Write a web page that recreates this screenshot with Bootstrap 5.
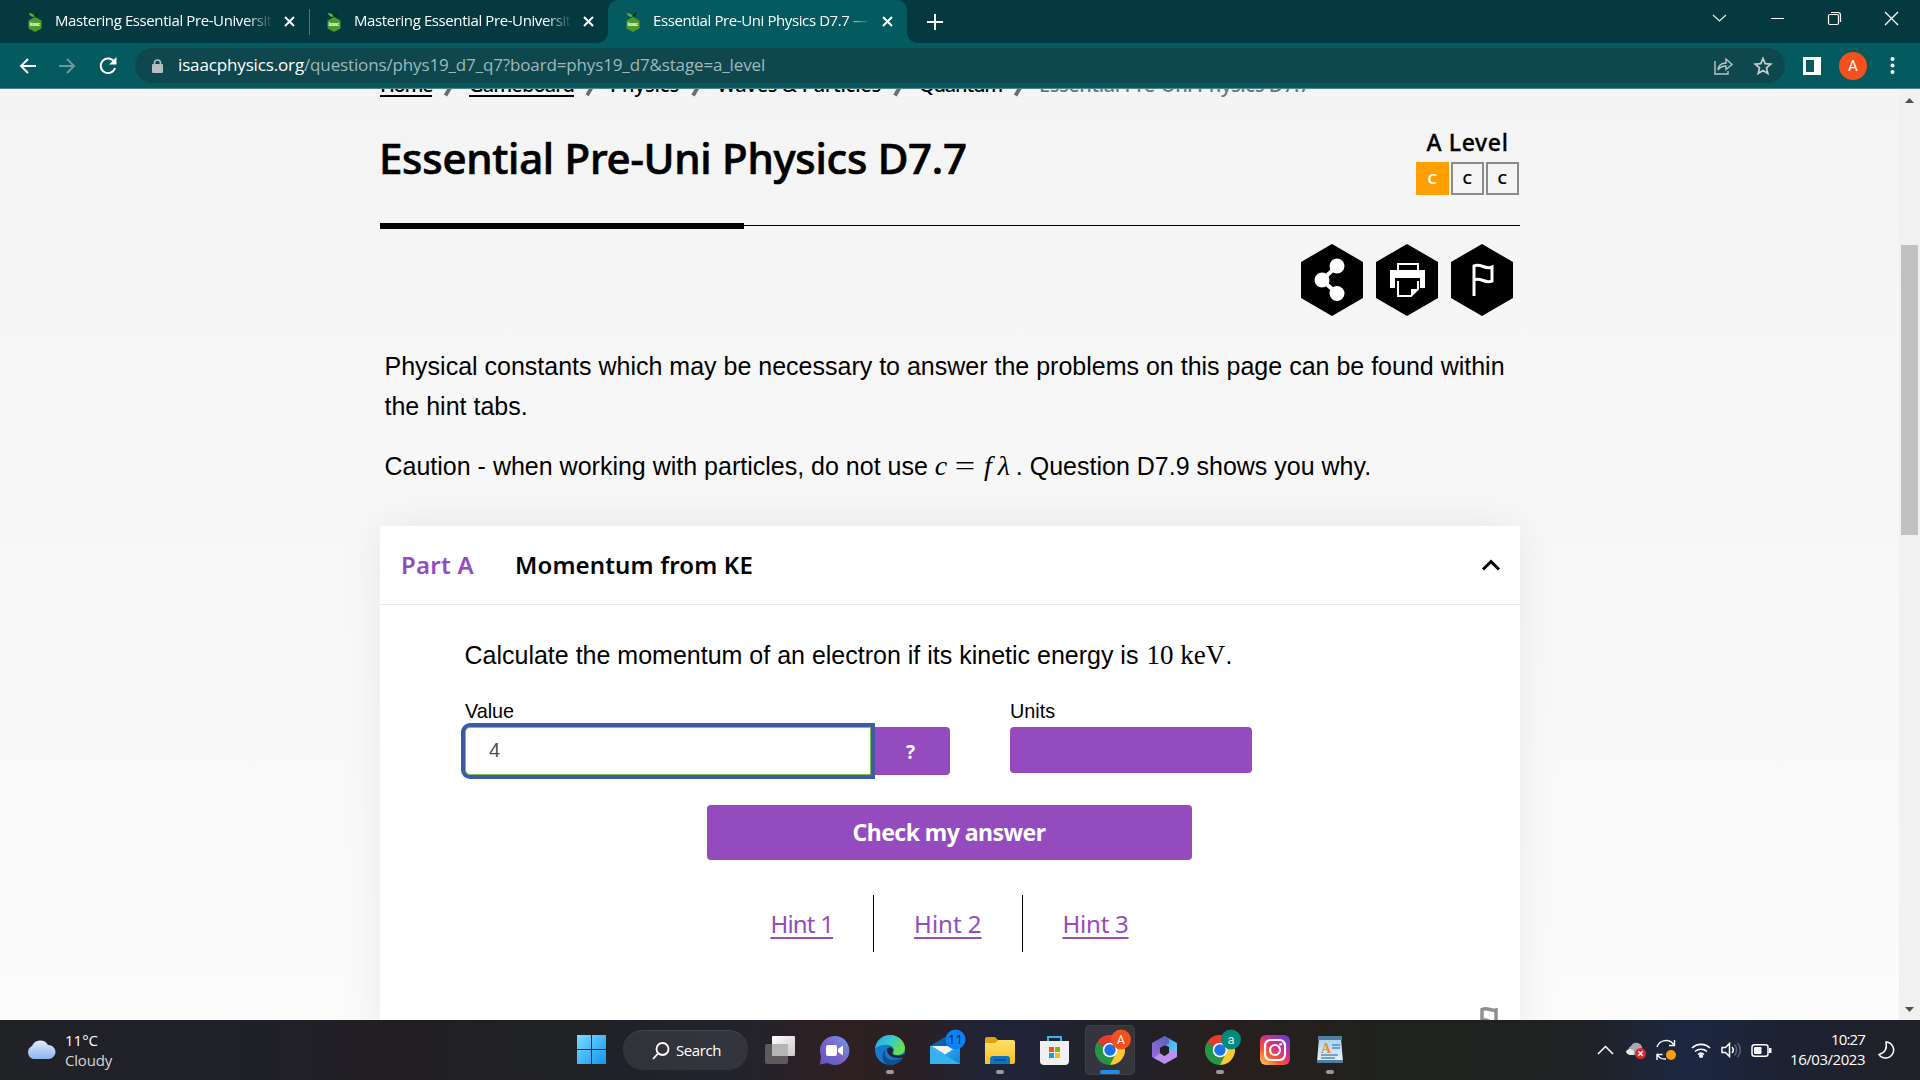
<!DOCTYPE html>
<html lang="en">
<head>
<meta charset="utf-8">
<meta name="viewport" content="width=device-width, initial-scale=1">
<title>Essential Pre-Uni Physics D7.7 — Isaac Physics</title>
<link href="https://cdn.jsdelivr.net/npm/bootstrap@5.3.0/dist/css/bootstrap.min.css" rel="stylesheet">
<style>
:root{--ui:"Open Sans","Noto Sans",sans-serif;--exo:"Noto Sans","Open Sans",sans-serif;--violet:#944bbd}
html,body{height:1080px;overflow:hidden}
body{background:#f5f5f5;color:#000;font-family:"Liberation Sans",Arial,sans-serif}
svg{display:block;flex:none;overflow:visible}
.fit{white-space:nowrap}
.tabstrip{height:43px;background:#03393f;font:15px/41px var(--ui);color:#fff}
.btab{height:43px;width:305px;padding-left:28px;position:relative}
.btab.second{width:303px;padding-left:22px}
.btab .ttl{width:218px;height:43px;margin-left:13px;overflow:hidden;white-space:nowrap;letter-spacing:-.4px;-webkit-mask-image:linear-gradient(90deg,#000 88%,transparent)}
.btab .x{margin-left:11px}
.btab.first::after{content:"";position:absolute;right:-5px;top:9px;width:1px;height:26px;background:#4d767a}
.btab.active{width:299px;padding-left:18px;background:#055a5f;border-radius:10px 10px 0 0}
.btab.active::before,.btab.active::after{content:"";position:absolute;bottom:0;width:10px;height:10px}
.btab.active::before{left:-10px;background:radial-gradient(circle at 0 0,#03393f 9.5px,#055a5f 10px)}
.btab.active::after{right:-10px;background:radial-gradient(circle at 100% 0,#03393f 9.5px,#055a5f 10px)}
.plus{margin-left:20px}
.wincontrols{gap:44px;padding-right:22px;margin-top:-7px}
.toolbar{height:46px;background:#055a5f;border-bottom:1px solid #4a8588;font:17px/34px var(--ui);padding-left:19px}
.navs{gap:23px}
.urlbar{width:1650px;height:35px;border-radius:18px;background:#0f474e;color:#9fb9bb;margin-left:18px;padding:0 13px 0 17px}
.urltext{margin-left:15px;letter-spacing:-.142px;height:35px}
.star{margin-left:21px}
.avatar{width:28px;height:28px;border-radius:50%;background:#f4511e;color:#fff;font:15px/28px Roboto,sans-serif;margin:0 23px 0 18px}
.viewport{height:931px;overflow:hidden;background:linear-gradient(#f4f4f4,#fbfbfb)}
.pagecol{width:1140px;margin-left:380px}
.scroller{width:21px;background:#f1f1f1}
.thumb{width:17px;height:290px;background:#c1c1c1;margin-top:142px}
.crumbs{height:14px;font:500 20px/28px var(--exo)}
.crumbs .trail{margin-top:-18px;height:28px}
.crumbs .fit{flex:none}
.crumbs u{text-underline-offset:3px;text-decoration-thickness:2px}
.crumbs i{font-style:normal;color:#6c757d}
.ls-home{letter-spacing:-1.4px;width:52px}.ls-game{letter-spacing:-.88px;width:105px}.ls-phys{letter-spacing:-.14px;width:69px}.ls-wave{letter-spacing:-.255px;width:164px}.ls-quan{letter-spacing:-1.19px;width:83px}.ls-last{letter-spacing:-.43px}
.qtitle{font:500 42px/50px var(--exo);margin:30px 0 0 -1px;letter-spacing:-.28px;-webkit-text-stroke:.7px #000}
.level{font:500 23px/28px var(--exo);margin:25px 1px 0 0;letter-spacing:.627px;-webkit-text-stroke:.3px #000}
.lvs{gap:2px;margin-top:6px;-webkit-text-stroke:0}
.lv{width:33px;height:33px;border:2px solid #8b8b8b;font:600 15px/28px var(--exo);color:#000}
.lv.on{background:#ffa000;border-color:#ffa000;color:#fff}
.headrow{height:120px}
.rule{height:6px;background:linear-gradient(#000,#000) 0 0/364px 6px no-repeat,linear-gradient(#000,#000) 0 2px/100% 1px no-repeat}
.hexes{gap:13px;margin-top:15px;padding-right:7px}
.prose{font-size:25px;line-height:40px;white-space:nowrap}
.intro{padding:30px 5px 0 4.5px}
.caution{margin-top:20px}
.math{font-family:"Liberation Serif",serif;font-size:28px;line-height:30px;margin:5px 0 0 7px}
.formula{width:81px}
.formula b{font-weight:400;display:inline-block;transform:scaleX(1.3);margin:0 11px 0 10px}
.formula .lam{margin-left:6px}
.energy{width:79px;font-size:27px;margin-left:8px}
.qcard{background:#fff;border:0;border-radius:0;height:520px;margin-top:40px;box-shadow:0 0 40px rgba(0,0,0,.07)}
.qhead{height:79px;border-bottom:1px solid #e8e8e8;padding:0 20px 0 21px;font:600 24px/76px var(--exo)}
.part{width:73px;margin-right:41px;letter-spacing:.279px;color:var(--violet)}
.ptitle{letter-spacing:.145px}
.qbody{padding:0 85px 0 84px}
.ask{padding:30px 0 0 .5px}
.fields{margin-top:22px;gap:60px;padding-left:1px}
.lbl{font-size:19.8px;line-height:28px;padding-bottom:2px}
.answer{width:406px;height:48px;border:1px solid #7fc24c;border-radius:5px 0 0 5px;box-shadow:0 0 0 4px #3f5aa6;font-size:20px;color:#495057;padding:0 23px;line-height:44px;position:relative;background:#fff}
.vbtn{background:var(--violet);color:#fff;border:0;font-family:var(--exo)}
.help{width:79px;height:48px;border-radius:0 4px 4px 0;font-weight:700;font-size:19px;padding:8px 10px 6px}
.units{width:242px;height:46px;border-radius:4px}
.checkrow{margin-top:30px;padding-right:1px}
.check{width:485px;height:55px;border-radius:4px;font-weight:700;font-size:23px;letter-spacing:-.539px}
.hints{margin-top:35px}
.hint{font:24px/57px var(--exo);height:57px;padding:0 40px;color:var(--violet);text-decoration:none}
.hint span{text-decoration:underline;text-decoration-thickness:2px;text-underline-offset:4px}
.hint+.hint{border-left:1px solid #000}
.h1s{letter-spacing:-.8px}.h3s{letter-spacing:-.242px}
.flagrow{margin:55px -63px 0}
.taskbar{height:60px;color:#fff;font:15px/20px var(--ui);background:linear-gradient(90deg,#202226 0,#1f2128 12%,#221f24 20%,#202226 30%,#22232d 38%,#2f2022 44%,#2a2023 47%,#20243a 52%,#20222c 57%,#271f1e 64%,#20221d 72%,#1f2223 82%,#1c2742 88%,#1d2232 93%,#202127)}
.cloud{margin-left:25px}
.weather{margin-left:9px;width:512px;padding-bottom:1px}
.weather .sky{color:#d5d5d8;letter-spacing:-.193px}
.spill{width:125px;height:40px;border-radius:20px;background:rgba(255,255,255,.08);border-top:1px solid rgba(255,255,255,.1);margin:0 4px 0 16px;padding-left:29px}
.spill span{margin:-2px 0 0 6px;letter-spacing:-.417px}
.app{width:55px;height:60px;position:relative}
.app::after{content:"";position:absolute;left:24px;bottom:6px;width:8px;height:4px;border-radius:2px}
.app.run::after{background:#9a9a9a}
.app.focus::after{background:#1690f5;left:18px;width:20px}
.app.focus::before{content:"";position:absolute;left:3px;top:5px;width:50px;height:50px;border-radius:5px;background:rgba(255,255,255,.09);border:1px solid rgba(255,255,255,.05)}
.app svg{position:relative}
.tray{margin-left:240px}
.tray svg{margin-right:10px}
.clock{width:83px;line-height:20.5px;letter-spacing:-.463px;padding-bottom:2px;margin-right:13px}
.clock .hm{letter-spacing:-.85px}
</style>
</head>
<body class="d-flex flex-column">
<svg width="0" height="0" class="position-absolute">
<defs>
<linearGradient id="gw" x1="0" y1="0" x2="1" y2="1"><stop stop-color="#7bdcff"/><stop offset="1" stop-color="#0f95f0"/></linearGradient>
<linearGradient id="gt" x1="0" y1="0" x2="1" y2="1"><stop stop-color="#fff"/><stop offset="1" stop-color="#c9c9c9"/></linearGradient>
<linearGradient id="gc" x1="0" y1="1" x2="1" y2="0"><stop stop-color="#5b55c8"/><stop offset=".5" stop-color="#7a66c5"/><stop offset="1" stop-color="#6f9bea"/></linearGradient>
<linearGradient id="ge" x1="0" y1="0" x2="1" y2=".5"><stop stop-color="#2c9fe0"/><stop offset=".5" stop-color="#36c8d0"/><stop offset="1" stop-color="#6be04a"/></linearGradient>
<linearGradient id="gm" x1="0" y1="0" x2="1" y2="1"><stop stop-color="#3fc0f3"/><stop offset="1" stop-color="#0f7fd6"/></linearGradient>
<linearGradient id="gf" x1="0" y1="0" x2="0" y2="1"><stop stop-color="#ffdf6b"/><stop offset="1" stop-color="#fcbf25"/></linearGradient>
<linearGradient id="g3" x1="0" y1="0" x2="1" y2="1"><stop stop-color="#3b8fdd"/><stop offset="1" stop-color="#5fd6f7"/></linearGradient>
<linearGradient id="g4" x1="0" y1="1" x2="1" y2="0"><stop stop-color="#a06be0"/><stop offset="1" stop-color="#4f63b8"/></linearGradient>
<linearGradient id="gi" x1="0" y1="1" x2=".8" y2="0"><stop stop-color="#ffd257"/><stop offset=".35" stop-color="#f9572f"/><stop offset=".65" stop-color="#d32b8b"/><stop offset="1" stop-color="#6a3fd0"/></linearGradient>
<linearGradient id="gp" x1="0" y1="0" x2="0" y2="1"><stop stop-color="#a8d4ef"/><stop offset="1" stop-color="#e6f3fb"/></linearGradient>
<linearGradient id="gl" x1="0" y1="0" x2="0" y2="1"><stop stop-color="#dfe9fb"/><stop offset="1" stop-color="#8fb4ee"/></linearGradient>
<symbol id="isaac" viewBox="0 0 14 20"><path d="M7 5l6.500 3.500v8L7 20 .5 16.500v-8z" fill="#4a9a2c"/><path d="M6.500 5C3 5 1.500 3.500 1 1c3 0 5 1 5.500 4z" fill="#5bb033"/><path d="M7 5c0-2 1-4 3.500-5-.2 2-1 4-3.500 5z" fill="#06262a"/><text x="7" y="14.300" text-anchor="middle" font-family="Roboto" font-weight="700" font-size="6" textLength="11" fill="#e7f5df">isaac</text></symbol>
<symbol id="cross" viewBox="0 0 11 11"><path d="M1 1l9 9M10 1l-9 9" stroke="#fff" stroke-width="2"/></symbol>
<symbol id="slash" viewBox="0 0 37 28"><path d="M13.500 24.500l8-13.500" stroke="#6c6c6c" stroke-width="3.800"/></symbol>
<symbol id="chrome" viewBox="0 0 30 30"><path d="M15 15L2 7.500A15 15 0 0 1 28 7.500z" fill="#e33b2e"/><path d="M15 15L28 7.500A15 15 0 0 1 15 30z" fill="#fcc934"/><path d="M15 15v15A15 15 0 0 1 2 7.500z" fill="#269548"/><path d="M15 8h13.200l-6.700 10.700z" fill="#fcc934"/><path d="M2 7.500l7 11.200L15 15z" fill="#269548"/><path d="M21 18.500L15 30l-4-10z" fill="#269548"/><circle cx="15" cy="15" r="7.300" fill="#fff"/><circle cx="15" cy="15" r="5.700" fill="#1a73e8"/></symbol>
</defs></svg>

<header>
<div class="tabstrip d-flex align-items-center">
  <div class="btab first d-flex align-items-center"><svg width="14" height="20"><use href="#isaac"/></svg><div class="ttl">Mastering Essential Pre-University</div><svg class="x" width="11" height="11"><use href="#cross"/></svg></div>
  <div class="btab second d-flex align-items-center"><svg width="14" height="20"><use href="#isaac"/></svg><div class="ttl">Mastering Essential Pre-University</div><svg class="x" width="11" height="11"><use href="#cross"/></svg></div>
  <div class="btab active d-flex align-items-center"><svg width="14" height="20"><use href="#isaac"/></svg><div class="ttl">Essential Pre-Uni Physics D7.7 —</div><svg class="x" width="11" height="11"><use href="#cross"/></svg></div>
  <svg class="plus" width="16" height="16" stroke="#fff" stroke-width="2"><path d="M8 0v16M0 8h16"/></svg>
  <div class="wincontrols ms-auto d-flex align-items-center">
    <svg width="14" height="8" fill="none" stroke="#e3ebeb" stroke-width="1.200"><path d="M0 1l6.500 6L13 1"/></svg>
    <svg width="13" height="2"><path d="M0 1.500h13" stroke="#fff" stroke-width="1"/></svg>
    <svg width="13" height="13" fill="none" stroke="#fff" stroke-width="1.200"><rect x=".5" y="2.500" width="10" height="10" rx="1.500"/><path d="M3 .5h7q2.500 0 2.500 2.500v7"/></svg>
    <svg width="13" height="13" stroke="#fff" stroke-width="1.300"><path d="M0 0l13 13M13 0L0 13"/></svg>
  </div>
</div>
<div class="toolbar d-flex align-items-center">
  <div class="navs d-flex align-items-center">
  <svg width="17" height="16" fill="none" stroke="#fff" stroke-width="2"><path d="M17 8H2M9 1L2 8l7 7"/></svg>
  <svg width="17" height="16" fill="none" stroke="#6c999c" stroke-width="2"><path d="M0 8h15M8 1l7 7-7 7"/></svg>
  <svg width="18" height="18" fill="none" stroke="#fff" stroke-width="2"><path d="M15.300 5A7.300 7.300 0 1 0 16 11"/><path d="M17.500 0v7.500H10z" fill="#fff" stroke="none"/></svg>
  </div>
  <div class="urlbar d-flex align-items-center">
    <svg width="11" height="14"><rect y="5" width="11" height="9" rx="1" fill="#b5bec0"/><path d="M2.500 6V4a3 3 0 0 1 6 0v2" fill="none" stroke="#b5bec0" stroke-width="1.600"/></svg>
    <span class="fit urltext"><span class="text-white">isaacphysics.org</span>/questions/phys19_d7_q7?board=phys19_d7&amp;stage=a_level</span>
    <svg class="ms-auto" width="19" height="18" fill="none" stroke="#bac5c7" stroke-width="1.400"><path d="M1 4v13h13v-3"/><path d="M4 13c.5-5 4-7 8-7V2l6 5.500-6 5V9c-3 0-6 1-8 4z"/></svg>
    <svg class="star" width="18" height="18" fill="none" stroke="#c6cfd0" stroke-width="1.700"><path d="M9 1.500l2.200 5.200 5.600.5-4.300 3.700 1.300 5.500L9 13.500l-4.800 2.900 1.300-5.500L1.200 7.200l5.600-.5z"/></svg>
  </div>
  <svg class="ms-3 ps-0" width="20" height="18"><path d="M2 0h18v18H2zM5 3v12h8V3z" fill="#fff" fill-rule="evenodd"/></svg>
  <div class="avatar text-center">A</div>
  <svg width="5" height="17" fill="#fff"><circle cx="2.500" cy="2" r="2"/><circle cx="2.500" cy="8.500" r="2"/><circle cx="2.500" cy="15" r="2"/></svg>
</div>
</header>

<div class="viewport d-flex">
<main class="pagecol">
  <nav class="crumbs d-flex"><div class="trail d-flex">
    <u class="fit ls-home">Home</u><svg width="37" height="28"><use href="#slash"/></svg><u class="fit ls-game">Gameboard</u><svg width="36" height="28"><use href="#slash"/></svg><span class="fit ls-phys">Physics</span><svg width="38" height="28"><use href="#slash"/></svg><span class="fit ls-wave">Waves &amp; Particles</span><svg width="38" height="28"><use href="#slash"/></svg><span class="fit ls-quan">Quantum</span><svg width="37" height="28"><use href="#slash"/></svg><i class="fit ls-last">Essential Pre-Uni Physics D7.7</i>
  </div></nav>
  <div class="headrow d-flex justify-content-between">
    <h1 class="qtitle mb-0">Essential Pre-Uni Physics D7.7</h1>
    <div class="level text-center">A Level<div class="lvs d-flex"><div class="lv on">C</div><div class="lv">C</div><div class="lv">C</div></div></div>
  </div>
  <div class="rule"></div>
  <div class="hexes d-flex justify-content-end">
    <svg width="62" height="72"><path d="M31 0l31 18v36L31 72 0 54V18z"/><g fill="#fff"><circle cx="21" cy="36" r="7.500"/><circle cx="36" cy="22" r="7.500"/><circle cx="36" cy="49.500" r="7.500"/></g><path d="M36 22L21 36l15 13.500" fill="none" stroke="#fff" stroke-width="4"/></svg>
    <svg width="62" height="72"><path d="M31 0l31 18v36L31 72 0 54V18z"/><path d="M14 26h35v18H14z" fill="#fff"/><path d="M19 34h25v11H19z"/><path d="M22 26v-6h20v6" fill="#000" stroke="#fff" stroke-width="2"/><path d="M21 27h22v7H21z" fill="#fff"/><path d="M22 37v15h13l7-7v-8" fill="#000" stroke="#fff" stroke-width="2"/><path d="M35 52v-7h7z" fill="#fff"/></svg>
    <svg width="62" height="72"><path d="M31 0l31 18v36L31 72 0 54V18z"/><path d="M23 52V22c7-3 11 4 18 1v14c-7 3-11-4-18-1" fill="none" stroke="#fff" stroke-width="3"/></svg>
  </div>
  <div class="prose intro">
    <div>Physical constants which may be necessary to answer the problems on this page can be found within</div>
    <div>the hint tabs.</div>
    <div class="caution d-flex"><span>Caution - when working with particles, do not use</span><span class="math formula"><em>c</em><b>=</b><em>f</em><em class="lam">λ</em></span><span>. Question D7.9 shows you why.</span></div>
  </div>
  <section class="qcard card">
    <div class="qhead d-flex align-items-center"><span class="fit part">Part A</span><span class="fit ptitle">Momentum from KE</span><svg class="ms-auto" width="18" height="12" fill="none" stroke="#000" stroke-width="3"><path d="M1 10.500L9 2.500l8 8"/></svg></div>
    <div class="qbody">
      <div class="prose ask d-flex"><span>Calculate the momentum of an electron if its kinetic energy is</span><span class="math energy">10 keV</span><span>.</span></div>
      <div class="fields d-flex">
        <div><div class="lbl">Value</div><div class="d-flex"><div class="answer">4</div><button class="btn vbtn help">?</button></div></div>
        <div><div class="lbl">Units</div><div class="units vbtn"></div></div>
      </div>
      <div class="checkrow text-center"><button class="btn vbtn check p-0">Check my answer</button></div>
      <div class="hints d-flex justify-content-center"><a class="hint"><span class="h1s">Hint 1</span></a><a class="hint"><span>Hint 2</span></a><a class="hint"><span class="h3s">Hint 3</span></a></div>
      <div class="flagrow d-flex justify-content-end"><svg width="18" height="24" fill="none" stroke="#8f8f8f" stroke-width="3.500"><path d="M2 24V2.500c6-3 8 2 14 .5v12c-6 2-8-3.500-14-2"/></svg></div>
    </div>
  </section>
</main>
<div class="scroller ms-auto d-flex flex-column align-items-center">
  <svg class="mt-2" width="9" height="6"><path d="M0 6L4.500 1 9 6z" fill="#505050"/></svg>
  <div class="thumb"></div>
  <svg class="mt-auto mb-2" width="9" height="5"><path d="M0 0l4.500 5L9 0z" fill="#505050"/></svg>
</div>
</div>

<footer class="taskbar d-flex align-items-center">
  <svg class="cloud" width="31" height="20"><path d="M8 19a7 7 0 0 1-1-13 9 9 0 0 1 16-1 7 7 0 0 1 1 14z" fill="url(#gl)"/></svg>
  <div class="weather"><div>11°C</div><div class="sky">Cloudy</div></div>
  <svg width="30" height="30" fill="url(#gw)"><path d="M0 0h14v14H0zM15 0h14v14H15zM0 15h14v14H0zM15 15h14v14H15z"/></svg>
  <div class="spill d-flex align-items-center"><svg width="18" height="18" fill="none" stroke="#fff" stroke-width="1.800"><circle cx="10.500" cy="7" r="6"/><path d="M6 11.500L1 17"/></svg><span>Search</span></div>
  <div class="d-flex">
    <div class="app d-flex align-items-center justify-content-center"><svg width="30" height="28"><rect y="8" width="23" height="20" rx="2" fill="#5b5b5b"/><rect x="7" width="23" height="20" rx="1" fill="url(#gt)"/><path d="M7 8h16v12H7z" fill="#b5b5b5"/></svg></div>
    <div class="app d-flex align-items-center justify-content-center"><svg width="29" height="29"><path d="M14.500 0a14.500 14.500 0 1 1-7 27L0 28.500 1 20A14.500 14.500 0 0 1 14.500 0z" fill="url(#gc)"/><rect x="6" y="9" width="11" height="11" rx="2" fill="#fff"/><path d="M18 13l5-3.500v10L18 16z" fill="#fff"/></svg></div>
    <div class="app run d-flex align-items-center justify-content-center"><svg width="30" height="30"><circle cx="15" cy="15" r="15" fill="#1679cc"/><path d="M0 14C1 5 8 0 15 0c9 0 15 7 15 13 0 5-4 7-8 7-3 0-4-1-4-2 2-2 1-7-4-8C8 9 2 11 0 14z" fill="url(#ge)"/><path d="M11 14c-4 8 4 15 17 8-3 6-9 8-14 8C7 29 5 18 11 14z" fill="#124f94"/><path d="M12 15c0-3 6-4 6 0 0 2-2 3 1 5 3 1 7 1 10-1v3c-9 3-17-1-17-7z" fill="#22252e"/></svg></div>
    <div class="app d-flex align-items-center justify-content-center"><svg width="30" height="30"><path d="M0 11L15 2l15 9z" fill="#1160ae"/><path d="M0 11h30v18H0z" fill="url(#gm)"/><path d="M0 11l30 18H0z" fill="#36b2ee"/><path d="M2 11h26L15 19.500z" fill="#eef2f5"/><circle cx="25.500" cy="4.500" r="10" fill="#0a84f5"/><text x="25.500" y="9" font-size="13" text-anchor="middle" fill="#071d38">11</text></svg></div>
    <div class="app run d-flex align-items-center justify-content-center"><svg width="30" height="27"><path d="M0 12V2Q0 0 2 0h8l3 3-3 5z" fill="#e0a10d"/><path d="M0 6h10l3-3h15q2 0 2 2v20q0 2-2 2H0z" fill="url(#gf)"/><path d="M5 27v-5q0-3 3-3h14q3 0 3 3v5z" fill="#1173c2"/><path d="M9 23h12" stroke="#0a4b8c" stroke-width="1.500"/></svg></div>
    <div class="app d-flex align-items-center justify-content-center"><svg width="29" height="29"><path d="M8 5V1h13v4" fill="none" stroke="#33b5ef" stroke-width="2"/><path d="M0 5h29v20q0 4-4 4H4q-4 0-4-4z" fill="#f0f0f0"/><path d="M9 11h5v5H9z" fill="#f25022"/><path d="M15 11h5v5h-5z" fill="#7fba00"/><path d="M9 17h5v5H9z" fill="#00a4ef"/><path d="M15 17h5v5h-5z" fill="#ffb900"/></svg></div>
    <div class="app focus d-flex align-items-center justify-content-center"><svg width="30" height="30"><use href="#chrome"/><circle cx="26" cy="4.500" r="10" fill="#f4511e"/><text x="26" y="9" font-size="12" text-anchor="middle" fill="#fff" font-family="Roboto">A</text></svg></div>
    <div class="app d-flex align-items-center justify-content-center"><svg width="27" height="28"><path d="M13.500 0L26 7v14l-8-5v-5L8 6z" fill="url(#g3)"/><path d="M13.500 0L1 7v14l6 3.500 2-4.500v-8l9-4.500V3z" fill="url(#g4)"/><path d="M3 22l10.500 6L26 21v-5l-4.500-2.500L13.500 20 9 17z" fill="#b990ef"/><path d="M13.500 9.500l4.500 2.500v5l-4.500 3L9 17v-5z" fill="#241f24"/></svg></div>
    <div class="app run d-flex align-items-center justify-content-center"><svg width="30" height="30"><use href="#chrome"/><circle cx="26" cy="4.500" r="10" fill="#00897b"/><text x="26" y="9" font-size="13" text-anchor="middle" fill="#d5eeeb" font-family="Roboto">a</text></svg></div>
    <div class="app d-flex align-items-center justify-content-center"><svg width="30" height="30"><rect width="30" height="30" rx="6" fill="url(#gi)"/><g fill="none" stroke="#fff" stroke-width="2.200"><rect x="5" y="5" width="20" height="20" rx="5.500"/><circle cx="15" cy="15" r="5"/></g><circle cx="20.700" cy="9.300" r="1.400" fill="#fff"/></svg></div>
    <div class="app run d-flex align-items-center justify-content-center"><svg width="25" height="28"><path d="M2 2h22l2 24H0z" fill="url(#gp)"/><path d="M1 0h24v4H1zM0 24h26v3H0z" fill="#537c9f"/><text x="9" y="17" font-family="Liberation Serif" font-weight="700" font-size="14" text-anchor="middle" fill="#f08b1d">A</text><path d="M15 9h8M15 12h8M4 19h17M4 22h14" stroke="#5585bd" stroke-width="1.300"/></svg></div>
  </div>
  <div class="tray d-flex align-items-center">
    <svg width="19" height="10" fill="none" stroke="#fff" stroke-width="1.500"><path d="M1 9l7.500-7.500L16 9"/></svg>
    <svg width="20" height="18"><path d="M5 14a5 5 0 0 1 0-9 6 6 0 0 1 11 1l2 8z" fill="#a9a9ad"/><path d="M4 14q-4-1-4-4 4-4 8 0v4z" fill="#e8e8e8"/><circle cx="14.500" cy="12.500" r="5.500" fill="#d92b33"/><path d="M12.300 10.300l4.400 4.400m0-4.400l-4.400 4.400" stroke="#fff" stroke-width="1.300"/></svg>
    <svg width="25" height="20" fill="none" stroke="#fff" stroke-width="1.400"><path d="M1 7a9.500 9.500 0 0 1 17-2M18.500 0v5.500H13M1 20v-5.500h5.500M1 14.500a9.500 9.500 0 0 0 9 4.500"/><circle cx="15" cy="15" r="5" fill="#ff9c0a" stroke="none"/></svg>
    <svg width="20" height="16" fill="none" stroke="#fff" stroke-width="1.600"><path d="M1 6a13 13 0 0 1 18 0M4 9.500a9 9 0 0 1 12 0M7 12.500a4.500 4.500 0 0 1 6 0"/><circle cx="10" cy="14" r="1.300" fill="#fff"/></svg>
    <svg width="20" height="16" fill="none" stroke="#fff" stroke-width="1.500"><path d="M1 5.500h3.500L8.500 1.500v13L4.500 10.500H1z"/><path d="M11 5a4.500 4.500 0 0 1 0 6"/><path d="M13.500 2.500a8 8 0 0 1 0 11M16.500 1a10 10 0 0 1 0 14" stroke="#5e6577"/></svg>
    <svg width="21" height="13"><rect x="1" y=".8" width="16" height="11.400" rx="2.500" fill="none" stroke="#fff" stroke-width="1.500"/><rect x="3" y="3" width="7.500" height="7" rx="1" fill="#fff"/><rect x="18" y="4" width="2.500" height="5" fill="#fff"/></svg>
    <div class="clock text-end"><div class="hm">10:27</div><div>16/03/2023</div></div>
    <svg width="16" height="18" fill="none" stroke="#fff" stroke-width="1.500"><path d="M8 1q2 10-7 12.500A8 8 0 1 0 8 1z"/></svg>
  </div>
</footer>
<script src="https://cdn.jsdelivr.net/npm/bootstrap@5.3.0/dist/js/bootstrap.bundle.min.js"></script>
</body>
</html>
